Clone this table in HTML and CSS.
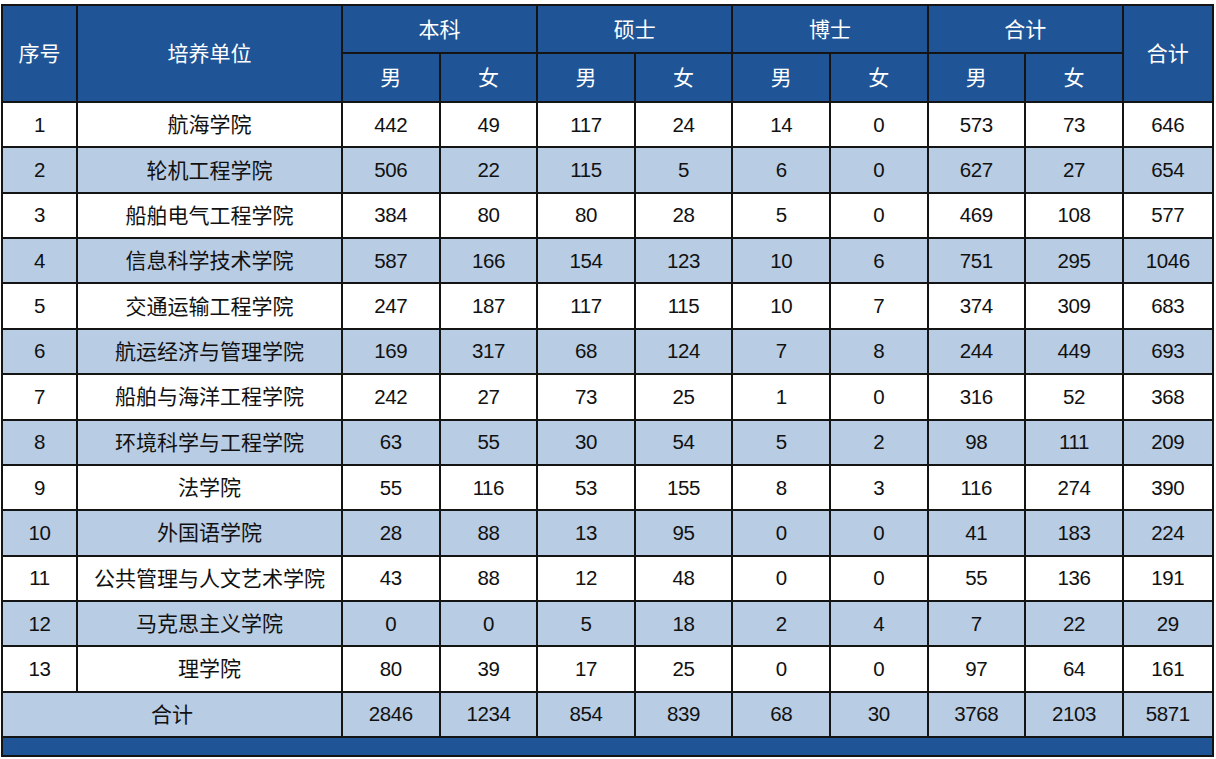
FILE: index.html
```html
<!DOCTYPE html>
<html lang="zh">
<head>
<meta charset="utf-8">
<link rel="stylesheet" href="styles.css">
</head>
<body>
<table class="stats">
  <colgroup>
    <col class="c-idx"><col class="c-unit">
    <col class="c-num"><col class="c-num"><col class="c-num"><col class="c-num">
    <col class="c-num"><col class="c-num"><col class="c-num"><col class="c-num">
    <col class="c-sum">
  </colgroup>
  <thead>
    <tr class="h1">
      <th rowspan="2">序号</th>
      <th rowspan="2">培养单位</th>
      <th colspan="2">本科</th>
      <th colspan="2">硕士</th>
      <th colspan="2">博士</th>
      <th colspan="2">合计</th>
      <th rowspan="2">合计</th>
    </tr>
    <tr class="h2">
      <th>男</th><th>女</th><th>男</th><th>女</th><th>男</th><th>女</th><th>男</th><th>女</th>
    </tr>
  </thead>
  <tbody>
    <tr><td>1</td><td class="cn">航海学院</td><td>442</td><td>49</td><td>117</td><td>24</td><td>14</td><td>0</td><td>573</td><td>73</td><td>646</td></tr>
    <tr class="alt"><td>2</td><td class="cn">轮机工程学院</td><td>506</td><td>22</td><td>115</td><td>5</td><td>6</td><td>0</td><td>627</td><td>27</td><td>654</td></tr>
    <tr><td>3</td><td class="cn">船舶电气工程学院</td><td>384</td><td>80</td><td>80</td><td>28</td><td>5</td><td>0</td><td>469</td><td>108</td><td>577</td></tr>
    <tr class="alt"><td>4</td><td class="cn">信息科学技术学院</td><td>587</td><td>166</td><td>154</td><td>123</td><td>10</td><td>6</td><td>751</td><td>295</td><td>1046</td></tr>
    <tr><td>5</td><td class="cn">交通运输工程学院</td><td>247</td><td>187</td><td>117</td><td>115</td><td>10</td><td>7</td><td>374</td><td>309</td><td>683</td></tr>
    <tr class="alt"><td>6</td><td class="cn">航运经济与管理学院</td><td>169</td><td>317</td><td>68</td><td>124</td><td>7</td><td>8</td><td>244</td><td>449</td><td>693</td></tr>
    <tr><td>7</td><td class="cn">船舶与海洋工程学院</td><td>242</td><td>27</td><td>73</td><td>25</td><td>1</td><td>0</td><td>316</td><td>52</td><td>368</td></tr>
    <tr class="alt"><td>8</td><td class="cn">环境科学与工程学院</td><td>63</td><td>55</td><td>30</td><td>54</td><td>5</td><td>2</td><td>98</td><td>111</td><td>209</td></tr>
    <tr><td>9</td><td class="cn">法学院</td><td>55</td><td>116</td><td>53</td><td>155</td><td>8</td><td>3</td><td>116</td><td>274</td><td>390</td></tr>
    <tr class="alt"><td>10</td><td class="cn">外国语学院</td><td>28</td><td>88</td><td>13</td><td>95</td><td>0</td><td>0</td><td>41</td><td>183</td><td>224</td></tr>
    <tr><td>11</td><td class="cn">公共管理与人文艺术学院</td><td>43</td><td>88</td><td>12</td><td>48</td><td>0</td><td>0</td><td>55</td><td>136</td><td>191</td></tr>
    <tr class="alt"><td>12</td><td class="cn">马克思主义学院</td><td>0</td><td>0</td><td>5</td><td>18</td><td>2</td><td>4</td><td>7</td><td>22</td><td>29</td></tr>
    <tr><td>13</td><td class="cn">理学院</td><td>80</td><td>39</td><td>17</td><td>25</td><td>0</td><td>0</td><td>97</td><td>64</td><td>161</td></tr>
    <tr class="alt"><td colspan="2" class="cn">合计</td><td>2846</td><td>1234</td><td>854</td><td>839</td><td>68</td><td>30</td><td>3768</td><td>2103</td><td>5871</td></tr>
    <tr class="footbar"><td colspan="11"></td></tr>
  </tbody>
</table>
</body>
</html>
```

FILE: styles.css
```css
html, body {
  margin: 0;
  padding: 0;
  background: #ffffff;
}
body {
  padding: 4px 0 0 1px;
  font-family: "Liberation Sans", "Noto Sans CJK SC", sans-serif;
}
.stats {
  border-collapse: collapse;
  table-layout: fixed;
  width: 1212px;
  border: 2px solid #141414;
}
.c-idx { width: 75px; }
.c-unit { width: 265px; }
.c-num { width: 97.6px; }
.c-sum { width: 90px; }
.stats th, .stats td {
  border: 2px solid #141414;
  padding: 0;
  text-align: center;
  vertical-align: middle;
  font-size: 20.5px;
  line-height: 24px;
  font-weight: normal;
  color: #111111;
  white-space: nowrap;
  overflow: hidden;
  letter-spacing: -0.4px;
}
.stats th, .stats td.cn {
  font-family: "Noto Sans CJK SC", sans-serif;
  font-size: 21px;
  letter-spacing: 0;
  padding-bottom: 3px;
}
.stats th {
  background: #1f5596;
  color: #ffffff;
}
.h1 { height: 48px; }
.h2 { height: 49px; }
.stats tbody tr { height: 45.36px; }
.stats tbody tr.alt td { background: #b8cce4; }
.stats tbody tr.footbar { height: 19px; }
.stats tbody tr.footbar td { background: #1f5596; }
```
